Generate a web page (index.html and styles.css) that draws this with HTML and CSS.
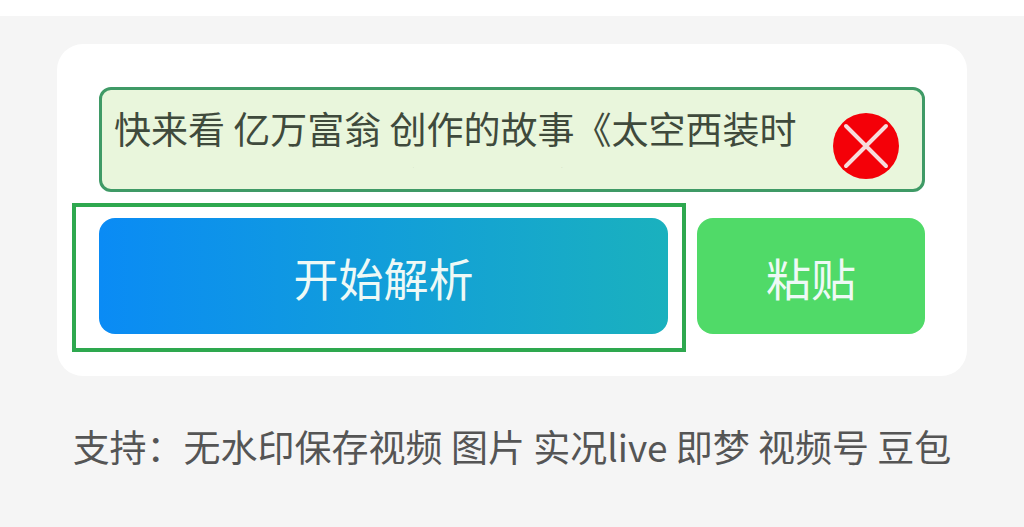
FILE: index.html
```html
<!DOCTYPE html>
<html lang="zh-CN">

<head>
    <meta charset="UTF-8">
    <meta name="viewport" content="width=device-width, initial-scale=1.0">
    <title>解析</title>
    <link rel="stylesheet" href="styles.css">
</head>

<body>
    <div class="page">
        <div class="card">
            <div class="input">
                <div class="inputText">快来看 亿万富翁 创作的故事《太空西装时代》，一起来看看这个精彩的故事吧</div>
                <svg class="clear" viewBox="0 0 66 66">
                    <circle cx="33" cy="33" r="33" fill="#f40008" />
                    <path d="M13 13 L53 53 M53 13 L13 53" stroke="#f7dcdc" stroke-width="4" stroke-linecap="round" />
                </svg>
            </div>
            <div class="actions">
                <div class="btn parse">开始解析<div class="highlight"></div>
                </div>
                <div class="btn paste">粘贴</div>
            </div>
        </div>
        <p class="support">支持：无水印保存视频 图片 实况live 即梦 视频号 豆包</p>
    </div>
</body>

</html>
```

FILE: styles.css
```css
* {
    margin: 0;
    padding: 0;
    box-sizing: border-box;
}

body {
    width: 1024px;
    height: 527px;
    overflow: hidden;
    background-color: #fff;
    font-family: "Noto Sans CJK SC", "Liberation Sans", sans-serif;
}

.page {
    margin-top: 16px;
    height: 511px;
    padding: 28px 57px 0;
    background-color: #f5f5f5;
}

.card {
    height: 332px;
    padding: 43px 42px 0;
    background-color: #fff;
    border-radius: 26px;
}

.input {
    display: flex;
    align-items: flex-start;
    justify-content: space-between;
    height: 105px;
    padding: 10px 23px 0 12px;
    background-color: #e9f6dc;
    border: 3px solid #3f9a66;
    border-radius: 12px;
}

.inputText {
    width: 700px;
    height: 68px;
    overflow: hidden;
    font-size: 37px;
    line-height: 56px;
    color: #3f4a3c;
}

.clear {
    width: 66px;
    height: 66px;
    margin-top: 13px;
}

.actions {
    display: flex;
    gap: 29px;
    margin-top: 26px;
}

.btn {
    display: flex;
    align-items: center;
    justify-content: center;
    height: 116px;
    padding-top: 2px;
    border-radius: 16px;
    color: #eef9f6;
    font-size: 45px;
}

.parse {
    position: relative;
    width: 569px;
    background: linear-gradient(90deg, #0a8bf5, #1ab1be);
}

.paste {
    width: 228px;
    background-color: #50da68;
}

.highlight {
    position: absolute;
    left: -27px;
    top: -15px;
    width: 614px;
    height: 149px;
    border: 4px solid #2ea84f;
}

.support {
    margin-top: 45px;
    text-align: center;
    font-size: 37px;
    line-height: 50px;
    color: #555;
    white-space: nowrap;
}
```
